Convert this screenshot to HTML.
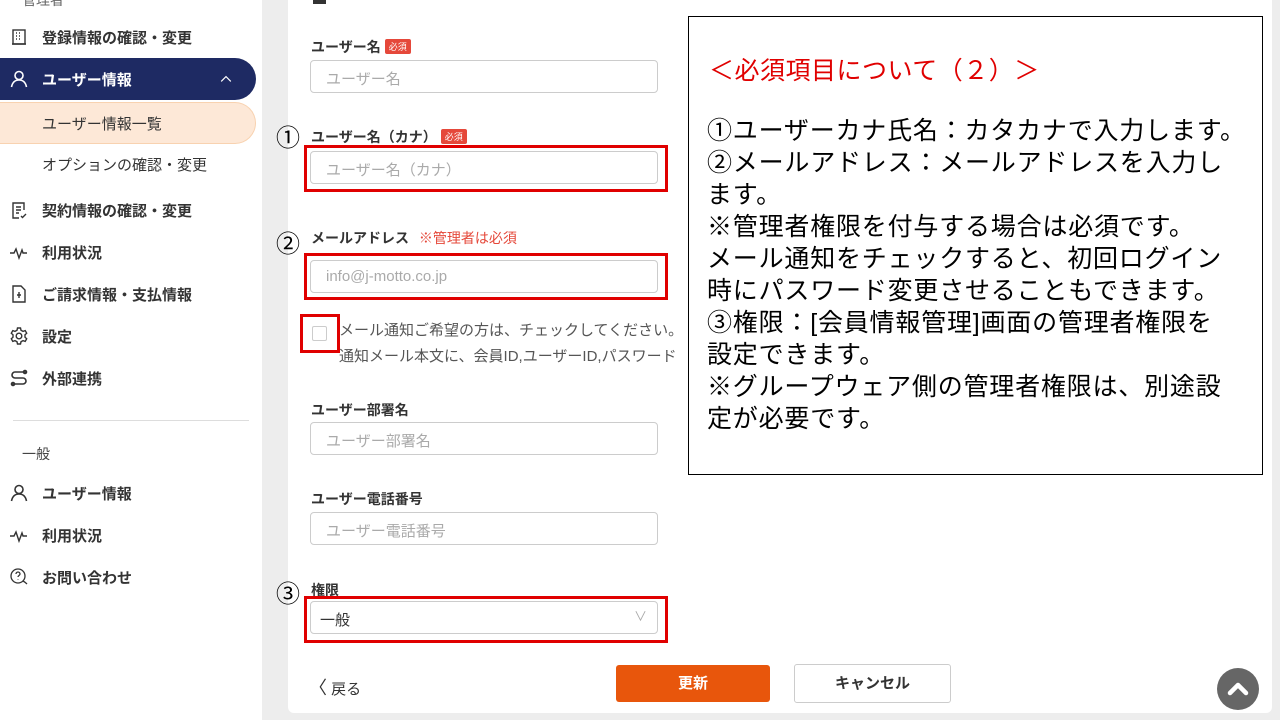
<!DOCTYPE html>
<html><head><meta charset="utf-8"><style>
*{margin:0;padding:0;box-sizing:border-box}
body{width:1280px;height:720px;overflow:hidden;background:#ededed;font-family:"Liberation Sans","Noto Sans CJK JP",sans-serif;position:relative;color:#333}
.side{position:absolute;left:0;top:0;width:262px;height:720px;background:#fff}
.it{position:absolute;left:0;height:42px;width:256px;display:flex;align-items:center;font-size:15px;font-weight:bold;color:#333}
.it svg{position:absolute;left:9px;width:20px;height:20px}
.it span{position:absolute;left:42px}
.abs{position:absolute}
.card{position:absolute;left:288px;top:-10px;width:984px;height:723px;background:#fff;border-radius:6px}
.lbl{position:absolute;font-size:14px;font-weight:bold;color:#333}
.req{display:inline-block;background:#e5483a;color:#fff;font-size:9px;padding:1px 4px;border-radius:2px;vertical-align:2px;margin-left:4px;font-weight:normal}
.inp{position:absolute;left:310px;width:348px;height:33px;border:1px solid #ccc;border-radius:4px;font-size:15px;color:#aaa;padding:7px 15px;background:#fff}
.red{position:absolute;border:3px solid #e00000}
.num{position:absolute;font-size:24px;color:#000;left:276px}
.note{position:absolute;left:688px;top:16px;width:575px;height:459px;border:1px solid #000;background:#fff;font-family:"Liberation Sans","Noto Sans CJK JP",sans-serif}
</style></head><body>
<div class="side">
<div class="abs" style="left:22px;top:-10px;font-size:14px;color:#666">管理者</div>
<div class="it" style="top:16px"><svg viewBox="0 0 20 20" fill="none" stroke="#333" stroke-width="1.4"><rect x="4" y="3" width="12" height="14"/><path d="M7 6h1M10 6h1M13 6h0M7 9h1M10 9h1M7 12h1M10 12h1M3 17h14"/></svg><span>登録情報の確認・変更</span></div>
<div class="it" style="top:58px;background:#1e2a63;color:#fff;border-radius:0 21px 21px 0"><svg viewBox="0 0 20 20" fill="none" stroke="#fff" stroke-width="1.6"><circle cx="10" cy="6.5" r="4"/><path d="M2.5 18c1-5 4-7 7.5-7s6.5 2 7.5 7"/></svg><span>ユーザー情報</span><svg viewBox="0 0 20 20" style="left:218px;width:16px" fill="none" stroke="#fff" stroke-width="1.5"><path d="M4 13l6-6 6 6"/></svg></div>
<div class="it" style="top:102px;background:#fde8d7;border:1px solid #f8d2b0;border-left:none;border-radius:0 21px 21px 0;font-weight:normal"><span>ユーザー情報一覧</span></div>
<div class="it" style="top:143px;font-weight:normal"><span>オプションの確認・変更</span></div>
<div class="it" style="top:189px"><svg viewBox="0 0 20 20" fill="none" stroke="#333" stroke-width="1.4"><path d="M15 10V3H4v15h6"/><path d="M7 7h5M7 10h5M7 13h3M12 16l1.5 1.5L17 14"/></svg><span>契約情報の確認・変更</span></div>
<div class="it" style="top:231px"><svg viewBox="0 0 20 20" fill="none" stroke="#333" stroke-width="1.4"><path d="M1 11h4l2-4 3 9 3-8 1 3h4"/></svg><span>利用状況</span></div>
<div class="it" style="top:273px"><svg viewBox="0 0 20 20" fill="none" stroke="#333" stroke-width="1.4"><path d="M4 2h8l4 4v12H4z"/><path d="M10 8v6M8 11h4"/></svg><span>ご請求情報・支払情報</span></div>
<div class="it" style="top:315px"><svg viewBox="0 0 20 20" fill="none" stroke="#333" stroke-width="1.4"><circle cx="10" cy="10" r="2.8"/><path d="M8.5 2h3l.5 2.3 2 1.1 2.2-.8 1.5 2.6-1.7 1.6v2.4l1.7 1.6-1.5 2.6-2.2-.8-2 1.1-.5 2.3h-3L8 15.7l-2-1.1-2.2.8-1.5-2.6L4 11.2V8.8L2.3 7.2l1.5-2.6 2.2.8 2-1.1z"/></svg><span>設定</span></div>
<div class="it" style="top:357px"><svg viewBox="0 0 20 20" fill="none" stroke="#333" stroke-width="1.6"><path d="M17 4H6a3 3 0 000 6h8a3 3 0 010 6H3"/><circle cx="16" cy="4" r="1.5"/><circle cx="4" cy="16" r="1.5"/></svg><span>外部連携</span></div>
<div class="abs" style="left:13px;top:420px;width:236px;height:1px;background:#ddd"></div>
<div class="abs" style="left:22px;top:444px;font-size:14px;color:#444">一般</div>
<div class="it" style="top:472px"><svg viewBox="0 0 20 20" fill="none" stroke="#333" stroke-width="1.6"><circle cx="10" cy="6.5" r="4"/><path d="M2.5 18c1-5 4-7 7.5-7s6.5 2 7.5 7"/></svg><span>ユーザー情報</span></div>
<div class="it" style="top:514px"><svg viewBox="0 0 20 20" fill="none" stroke="#333" stroke-width="1.4"><path d="M1 11h4l2-4 3 9 3-8 1 3h4"/></svg><span>利用状況</span></div>
<div class="it" style="top:556px"><svg viewBox="0 0 20 20" fill="none" stroke="#333" stroke-width="1.3"><circle cx="9" cy="9" r="7"/><path d="M7 7a2 2 0 114 0c0 1.5-2 1.5-2 3M9 12.5v.5M14 14c2 1 3 2 4 3"/></svg><span>お問い合わせ</span></div>
</div>
<div class="card"></div>
<div class="abs" style="left:313px;top:0;width:13px;height:4px;background:#333"></div>
<div class="lbl" style="left:311px;top:37px">ユーザー名<span class="req">必須</span></div>
<div class="inp" style="top:60px">ユーザー名</div>
<div class="num" style="top:118px">①</div>
<div class="lbl" style="left:311px;top:127px">ユーザー名（カナ）<span class="req">必須</span></div>
<div class="inp" style="top:151px">ユーザー名（カナ）</div>
<div class="red" style="left:304px;top:145px;width:364px;height:47px"></div>
<div class="num" style="top:224px">②</div>
<div class="lbl" style="left:311px;top:228px">メールアドレス <span style="color:#e5483a;font-weight:normal;font-size:14px;margin-left:6px">※管理者は必須</span></div>
<div class="inp" style="top:260px;font-family:'Liberation Sans',sans-serif">info@j-motto.co.jp</div>
<div class="red" style="left:304px;top:253px;width:364px;height:47px"></div>
<div class="abs" style="left:312px;top:326px;width:15px;height:15px;border:1px solid #ccc;border-radius:2px"></div>
<div class="red" style="left:300px;top:314px;width:40px;height:39px"></div>
<div class="abs" style="left:339px;top:318px;width:348px;overflow:hidden;font-size:15px;color:#555;line-height:26px;white-space:nowrap">メール通知ご希望の方は、チェックしてください。<br>通知メール本文に、会員ID,ユーザーID,パスワード</div>
<div class="lbl" style="left:311px;top:400px">ユーザー部署名</div>
<div class="inp" style="top:422px">ユーザー部署名</div>
<div class="lbl" style="left:311px;top:489px">ユーザー電話番号</div>
<div class="inp" style="top:512px">ユーザー電話番号</div>
<div class="num" style="top:574px">③</div>
<div class="lbl" style="left:311px;top:580px">権限</div>
<div class="inp" style="top:601px;color:#333;padding-left:9px">一般<span style="position:absolute;right:10px;top:4px;color:#aaa;font-size:13px">∨</span></div>
<div class="red" style="left:304px;top:596px;width:364px;height:47px"></div>
<div class="abs" style="left:309px;top:674px;font-size:15px;color:#333"><span style="font-size:18px">〈</span> 戻る</div>
<div class="abs" style="left:616px;top:665px;width:154px;height:37px;background:#e8560c;border-radius:3px;color:#fff;font-weight:bold;font-size:15px;text-align:center;line-height:37px">更新</div>
<div class="abs" style="left:794px;top:664px;width:157px;height:39px;border:1px solid #ccc;border-radius:3px;color:#333;font-weight:bold;font-size:15px;text-align:center;line-height:37px;background:#fff">キャンセル</div>
<div class="abs" style="left:1217px;top:668px;width:42px;height:42px;border-radius:50%;background:#666"><svg viewBox="0 0 42 42" width="42" height="42" fill="none" stroke="#fff" stroke-width="4.5" stroke-linecap="round" stroke-linejoin="round"><path d="M13 25l8-8 8 8"/></svg></div>
<div class="note">
<div class="abs" style="left:20px;top:34px;color:#e00000;font-size:25px;white-space:nowrap;letter-spacing:0.5px">＜必須項目について（２）＞</div>
<div class="abs" style="left:18px;top:98px;font-size:25px;line-height:32px;color:#000;white-space:nowrap;letter-spacing:0.8px">①ユーザーカナ氏名：カタカナで入力します。<br>②メールアドレス：メールアドレスを入力し<br>ます。<br>※管理者権限を付与する場合は必須です。<br>メール通知をチェックすると、初回ログイン<br>時にパスワード変更させることもできます。<br>③権限：[会員情報管理]画面の管理者権限を<br>設定できます。<br>※グループウェア側の管理者権限は、別途設<br>定が必要です。</div>
</div>
</body></html>
